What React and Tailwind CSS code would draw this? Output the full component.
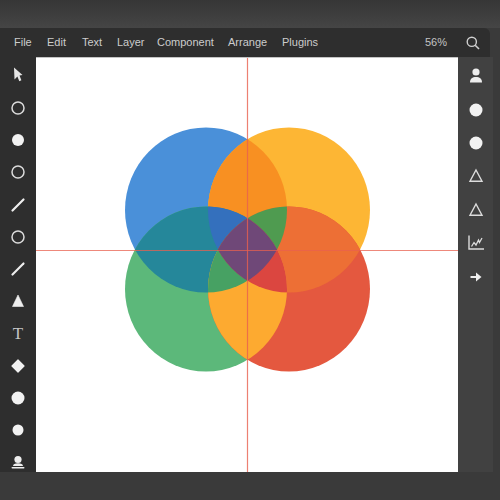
const MENU = [
  ["File", "w-[22px]", "ml-[14px]"],
  ["Edit", "w-[20px]", "ml-[11px]"],
  ["Text", "w-[21px]", "ml-[15px]"],
  ["Layer", "w-[27px]", "ml-[14px]"],
  ["Component", "w-[57px]", "ml-[13px]"],
  ["Arrange", "w-[40px]", "ml-[14px]"],
  ["Plugins", "w-[36px]", "ml-[14px]"],
];

function Ico({ children, size = 20 }) {
  return (
    <svg width={size} height={size} viewBox="0 0 20 20" className="block">
      {children}
    </svg>
  );
}
const C = "#dcdcdc";
const Cursor = () => (
  <Ico><path d="M6 1.5 L14.5 9 L11.5 9.6 L13.4 14.2 L11.3 15.2 L9.4 10.6 L6.5 13.5 Z" fill="#e6e6e6" /></Ico>
);
const Ring = () => (
  <Ico><circle cx="10" cy="10" r="6" fill="none" stroke={C} strokeWidth="1.5" /></Ico>
);
const Dot = ({ r = 6.5 }) => (
  <Ico><circle cx="10" cy="10" r={r} fill="#f2f2f2" /></Ico>
);
const Slash = () => (
  <Ico><line x1="4.5" y1="15.5" x2="15.5" y2="4.5" stroke="#eeeeee" strokeWidth="2.2" strokeLinecap="round" /></Ico>
);
const Tri = () => (
  <Ico><path d="M10 4 L15.5 15.5 L4.5 15.5 Z" fill="#eeeeee" stroke="#eeeeee" strokeWidth="0.6" strokeLinejoin="round" /></Ico>
);
const TriO = () => (
  <Ico><path d="M10 4 L16 15.2 L4 15.2 Z" fill="none" stroke={C} strokeWidth="1.4" /></Ico>
);
const Diamond = () => (
  <Ico><path d="M10 4 L16 10 L10 16 L4 10 Z" fill="#f2f2f2" stroke="#f2f2f2" strokeWidth="1.2" strokeLinejoin="round" /></Ico>
);
const Person = () => (
  <Ico>
    <circle cx="10" cy="6" r="3.6" fill="#eeeeee" />
    <path d="M4 16.5 C4 12.5 6.5 11 10 11 C13.5 11 16 12.5 16 16.5 Z" fill="#eeeeee" />
  </Ico>
);
const PersonSmall = () => (
  <Ico>
    <circle cx="10" cy="6.5" r="3.6" fill="#eeeeee" />
    <path d="M5 13 C5 11 7 10.2 10 10.2 C13 10.2 15 11 15 13 Z" fill="#eeeeee" />
    <rect x="3.5" y="14" width="13" height="1.6" rx="0.8" fill="#eeeeee" />
  </Ico>
);
const Chart = () => (
  <Ico>
    <path d="M3 2.5 V16 H18" fill="none" stroke={C} strokeWidth="1.4" />
    <path d="M5.5 13.5 L8 9.5 L10 12 L12.5 7 L13.5 9.5 L16 5" fill="none" stroke={C} strokeWidth="1.3" />
  </Ico>
);
const Arrow = () => (
  <Ico>
    <path d="M4.5 10 H11" stroke="#eeeeee" strokeWidth="2" />
    <path d="M10 5.5 L15.5 10 L10 14.5 Z" fill="#eeeeee" />
  </Ico>
);
const SerifT = () => (
  <span className="block text-[17px] leading-none text-[#c4c4c4] font-['Liberation_Serif',serif]">T</span>
);

const LEFT = [
  <Cursor />, <Ring />, <Dot r={6} />, <Ring />, <Slash />, <Ring />, <Slash />,
  <Tri />, <SerifT />, <Diamond />, <Dot />, <Dot r={5.5} />, <PersonSmall />,
];
const RIGHT = [<Person />, <Dot />, <Dot />, <TriO />, <TriO />, <Chart />, <Arrow />];

function Diagram() {
  const b = { cx: 206, cy: 210 };
  const y = { cx: 289, cy: 210 };
  const g = { cx: 206, cy: 289 };
  const d = { cx: 289, cy: 289 };
  const ox = -36, oy = -58;
  const Cc = ({ c, ...rest }) => <ellipse cx={c.cx + ox} cy={c.cy + oy} rx={81} ry={82.5} {...rest} />;
  return (
    <svg width="422" height="414" viewBox="0 0 422 414" className="block">
      <defs>
        <clipPath id="cb"><Cc c={b} /></clipPath>
        <clipPath id="cy"><Cc c={y} /></clipPath>
        <clipPath id="cg"><Cc c={g} /></clipPath>
        <clipPath id="cr"><Cc c={d} /></clipPath>
      </defs>
      <Cc c={b} fill="#4a90d9" />
      <Cc c={y} fill="#fdb634" />
      <Cc c={g} fill="#5cb87a" />
      <Cc c={d} fill="#e4583f" />
      <g clipPath="url(#cb)"><Cc c={y} fill="#f89022" /></g>
      <g clipPath="url(#cb)"><Cc c={g} fill="#25879a" /></g>
      <g clipPath="url(#cy)"><Cc c={d} fill="#ed6f35" /></g>
      <g clipPath="url(#cg)"><Cc c={d} fill="#fdaa30" /></g>
      <g clipPath="url(#cb)"><g clipPath="url(#cy)"><Cc c={g} fill="#3470bd" /></g></g>
      <g clipPath="url(#cb)"><g clipPath="url(#cy)"><Cc c={d} fill="#4f9b50" /></g></g>
      <g clipPath="url(#cb)"><g clipPath="url(#cg)"><Cc c={d} fill="#47a163" /></g></g>
      <g clipPath="url(#cy)"><g clipPath="url(#cr)"><Cc c={g} fill="#db4640" /></g></g>
      <g clipPath="url(#cb)"><g clipPath="url(#cy)"><g clipPath="url(#cg)"><Cc c={d} fill="#6f4878" /></g></g></g>
      <line x1="211.5" y1="0" x2="211.5" y2="414" stroke="#e8604f" strokeOpacity="0.8" strokeWidth="1.2" />
      <line x1="0" y1="192.5" x2="422" y2="192.5" stroke="#e8604f" strokeOpacity="0.75" strokeWidth="1.2" />
    </svg>
  );
}

export default function App() {
  return (
    <div className="w-[500px] h-[500px] overflow-hidden flex flex-col bg-[#3a3a3a] font-['Liberation_Sans',sans-serif]">
      <div className="h-[28px] shrink-0 bg-gradient-to-b from-[#363636] to-[#454545]" />
      <div className="w-[493px] shrink-0">
        <div className="w-[490px] h-[29px] flex items-center bg-[#2e2e2e] rounded-tr-[6px] text-[11px] text-[#cccccc]">
          {MENU.map(([t, w, ml]) => (
            <span key={t} className={`${w} ${ml} whitespace-nowrap`}>{t}</span>
          ))}
          <span className="ml-auto mr-[18px] text-[#c4c4c4]">56%</span>
          <svg width="16" height="16" viewBox="0 0 16 16" className="mr-[9px]">
            <circle cx="6.8" cy="6.8" r="4.6" fill="none" stroke="#d0d0d0" strokeWidth="1.4" />
            <line x1="10.2" y1="10.2" x2="14" y2="14" stroke="#d0d0d0" strokeWidth="1.6" />
          </svg>
        </div>
        <div className="flex h-[415px]">
          <div className="w-[36px] shrink-0 bg-[#2e2e2e] flex flex-col items-center pt-[2.5px] overflow-hidden">
            {LEFT.map((ic, i) => (
              <div key={i} className="h-[32.25px] w-full shrink-0 flex items-center justify-center">{ic}</div>
            ))}
          </div>
          <div className="w-[422px] shrink-0 bg-white border-t border-[#c4c4c4] overflow-hidden">
            <Diagram />
          </div>
          <div className="w-[35px] shrink-0 bg-[#414141] flex flex-col items-center pt-[2.5px]">
            {RIGHT.map((ic, i) => (
              <div key={i} className="h-[33.4px] w-full shrink-0 flex items-center justify-center">{ic}</div>
            ))}
          </div>
        </div>
      </div>
      <div className="flex-1 bg-[#3a3a3a]" />
    </div>
  );
}
